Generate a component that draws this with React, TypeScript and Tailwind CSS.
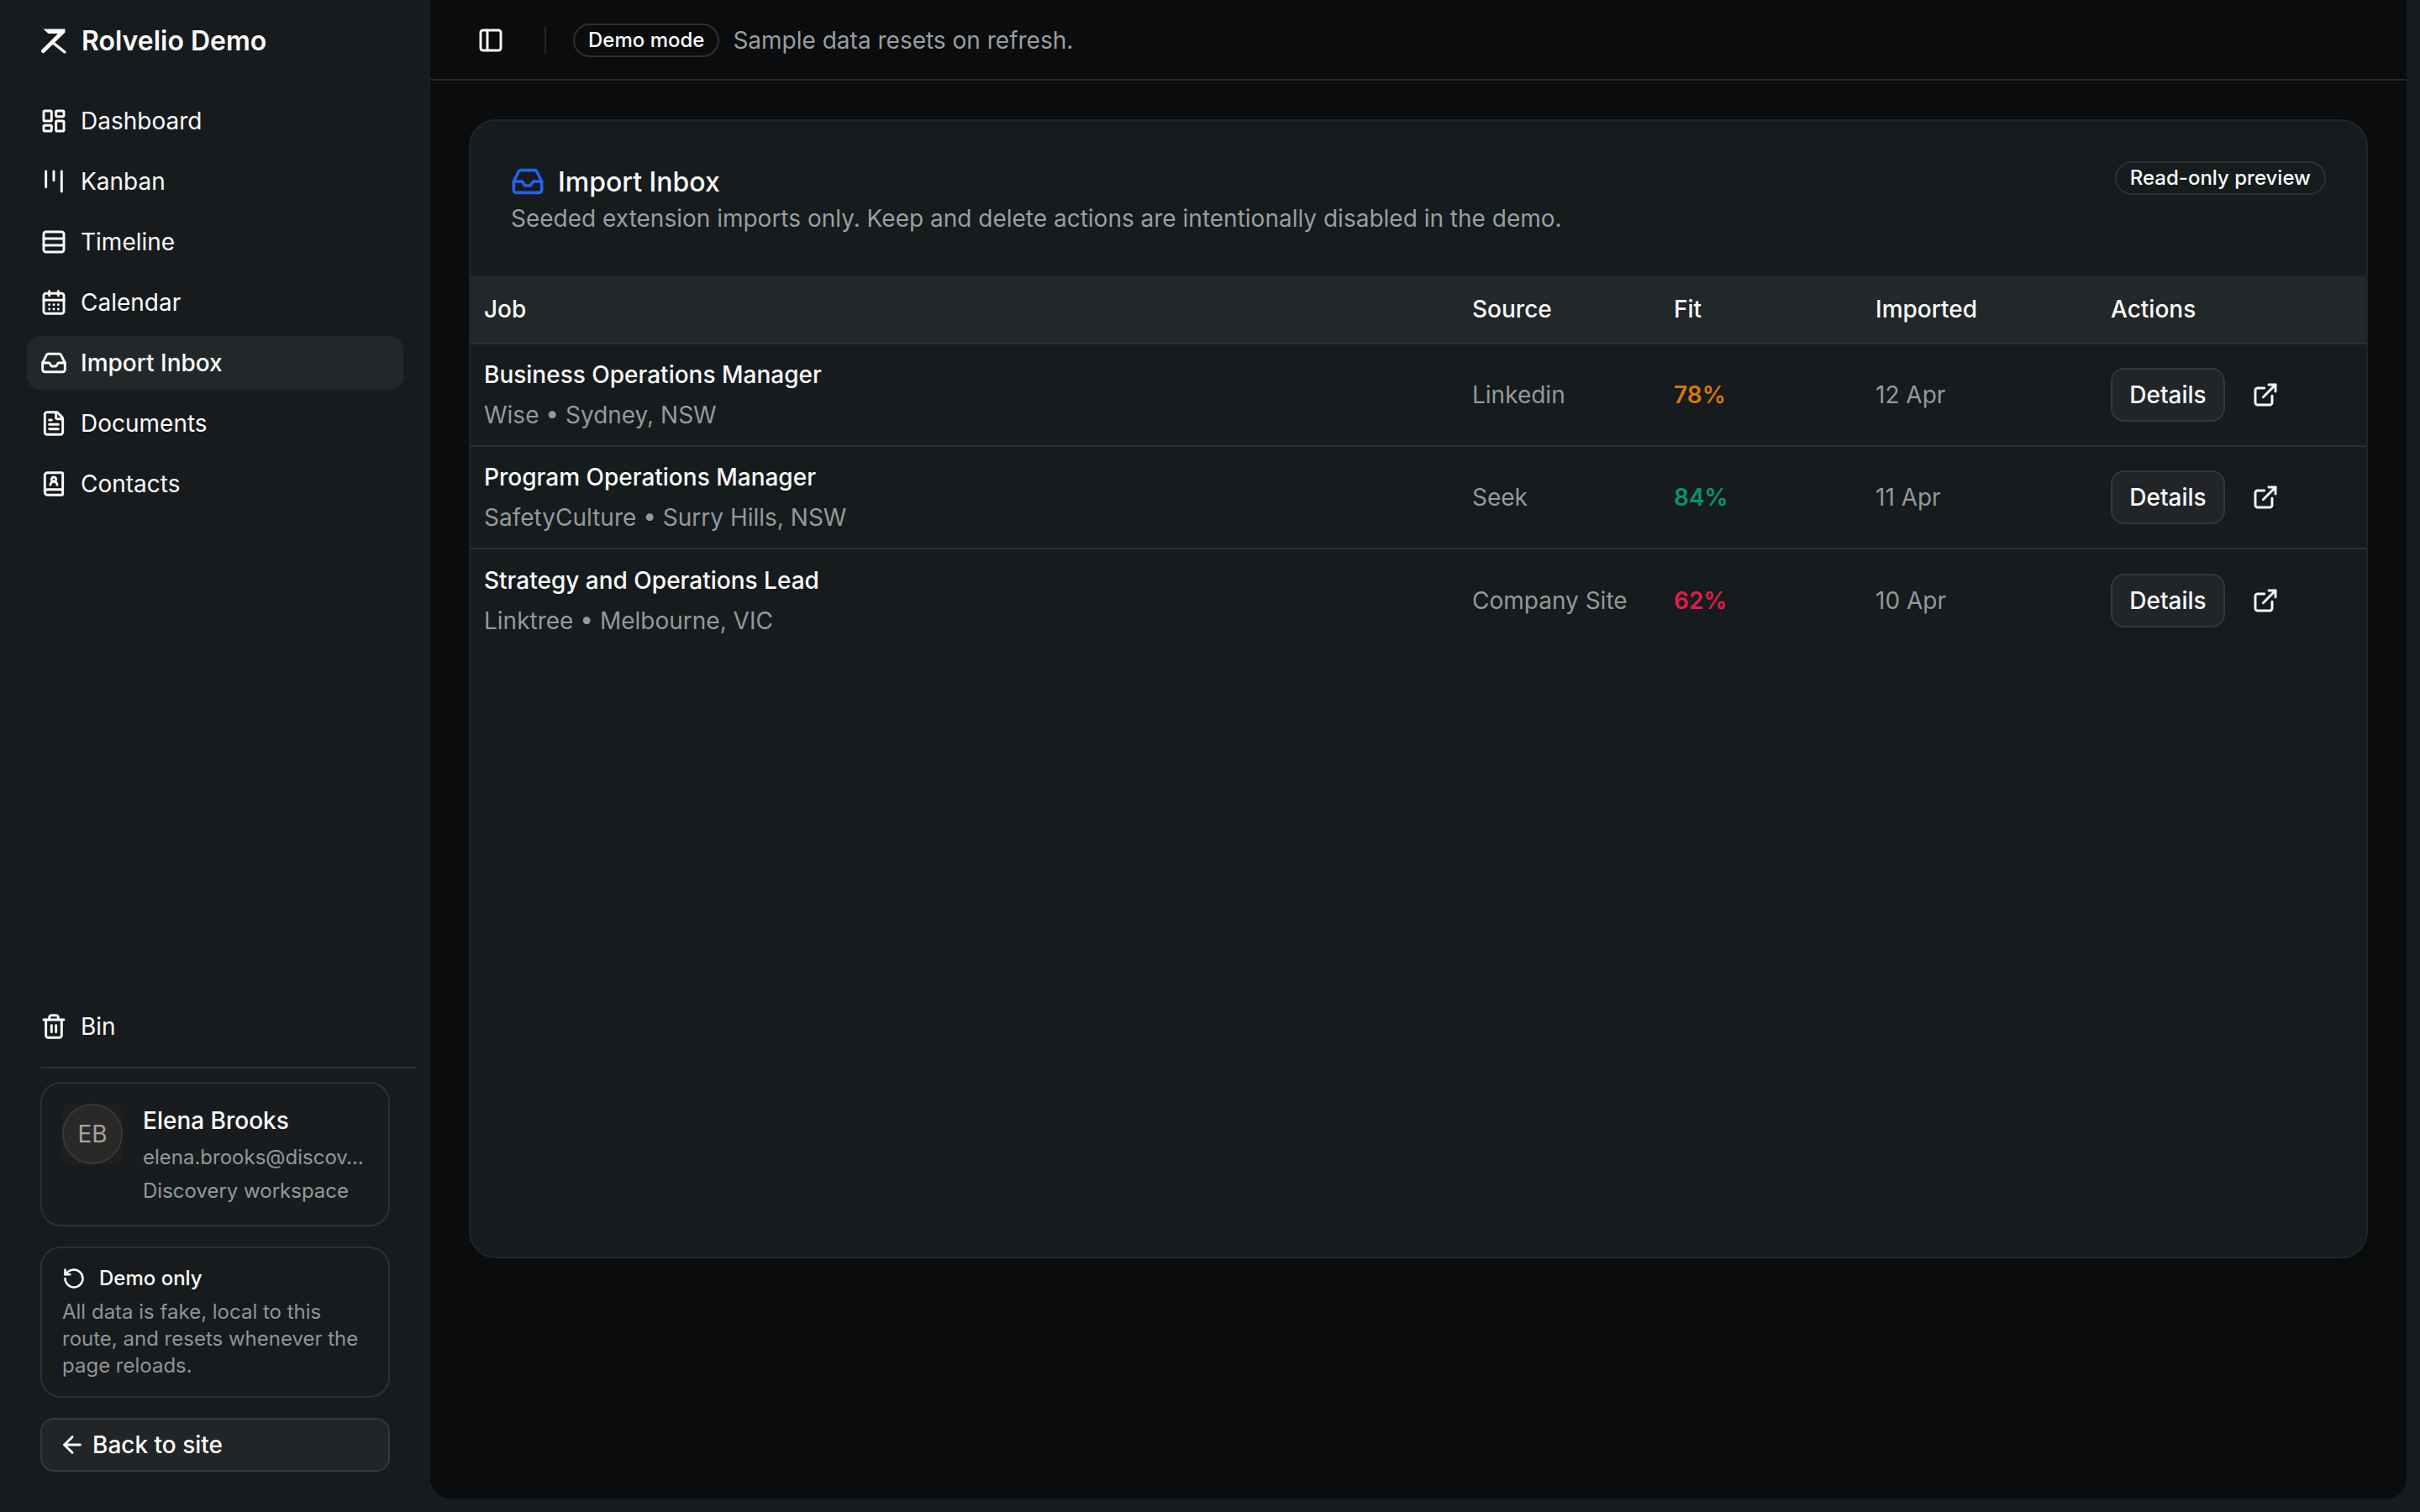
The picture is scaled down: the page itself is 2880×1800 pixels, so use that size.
import React from "react";
import {
  ArrowLeft,
  BookUser,
  CalendarDays,
  ExternalLink,
  FileText,
  Inbox,
  Kanban,
  LayoutDashboard,
  PanelLeft,
  RotateCcw,
  Rows3,
  Trash2,
} from "lucide-react";

const navItems = [
  { label: "Dashboard", icon: LayoutDashboard },
  { label: "Kanban", icon: Kanban },
  { label: "Timeline", icon: Rows3 },
  { label: "Calendar", icon: CalendarDays },
  { label: "Import Inbox", icon: Inbox, active: true },
  { label: "Documents", icon: FileText },
  { label: "Contacts", icon: BookUser },
];

const jobs = [
  {
    title: "Business Operations Manager",
    meta: "Wise • Sydney, NSW",
    source: "Linkedin",
    fit: "78%",
    fitClass: "text-[#d97706]",
    imported: "12 Apr",
  },
  {
    title: "Program Operations Manager",
    meta: "SafetyCulture • Surry Hills, NSW",
    source: "Seek",
    fit: "84%",
    fitClass: "text-[#059669]",
    imported: "11 Apr",
  },
  {
    title: "Strategy and Operations Lead",
    meta: "Linktree • Melbourne, VIC",
    source: "Company Site",
    fit: "62%",
    fitClass: "text-[#e11d48]",
    imported: "10 Apr",
  },
];

const Logo = () => (
  <svg viewBox="0 0 32 32" className="w-8 h-8 shrink-0" fill="none">
    <path
      d="M3.5 1.5H29.5V5.5L5 29.5C4 30.5 2.5 30.5 1.7 29.5C0.8 28.6 0.8 27.2 1.7 26.3L21 7H9.5Z"
      fill="#fafafa"
    />
    <path d="M16.5 19L29 29" stroke="#fafafa" strokeWidth="3.4" strokeLinecap="round" />
  </svg>
);

const Sidebar = () => (
  <aside className="w-[512px] shrink-0 h-full flex flex-col">
    <div className="h-24 shrink-0 pl-12 pt-[2px] flex items-center gap-[17px]">
      <Logo />
      <span className="text-[32px] font-semibold text-[#fafafa]">Rolvelio Demo</span>
    </div>
    <nav className="px-8 pt-4 flex flex-col gap-2">
      {navItems.map((item) => {
        const Icon = item.icon;
        return (
          <a
            key={item.label}
            className={`h-16 rounded-2xl px-4 flex items-center gap-4 text-[28px] text-[#fafafa] ${
              item.active ? "bg-[#22282a] font-medium" : ""
            }`}
          >
            <Icon size={32} strokeWidth={2.2} />
            {item.label}
          </a>
        );
      })}
    </nav>

    <div className="mt-auto pl-12 pb-12 flex flex-col">
      <a className="h-16 flex items-center gap-4 text-[28px] text-[#fafafa]">
        <Trash2 size={32} strokeWidth={2.2} />
        Bin
      </a>
      <div className="h-[2px] mt-4 w-[448px] bg-[#2b3033]" />
      <div className="mt-4 w-[416px] h-[172px] rounded-3xl border-2 border-[#2b3033] bg-[#191c1f] pl-6 pt-6 flex gap-6">
        <div className="w-[72px] h-[72px] shrink-0 rounded-xl bg-[#201f1e]">
          <div className="w-full h-full rounded-full border-2 border-[#3a3836] bg-[#2a2927] flex items-center justify-center text-[28px] text-[#a3a3a3]">
            EB
          </div>
        </div>
        <div className="min-w-0 flex-1 pr-6">
          <div className="mb-1 text-[28px] leading-10 font-medium text-[#fafafa]">Elena Brooks</div>
          <div className="text-2xl leading-10 text-[#94989b]">elena.brooks@discov…</div>
          <div className="text-2xl leading-10 text-[#94989b]">Discovery workspace</div>
        </div>
      </div>
      <div className="mt-6 w-[416px] h-[180px] rounded-3xl border-2 border-[#2b3033] px-6 pt-5">
        <div className="flex items-center gap-[16px] text-2xl leading-8 font-medium text-[#fafafa]">
          <RotateCcw size={28} strokeWidth={2.2} />
          Demo only
        </div>
        <p className="mt-2 text-2xl leading-8 text-[#8f9498]">
          All data is fake, local to this route, and resets whenever the page reloads.
        </p>
      </div>
      <a className="mt-6 w-[416px] h-16 rounded-2xl border-2 border-[#33383b] bg-[#212528] pl-[20px] flex items-center gap-2 text-[28px] font-medium text-[#fafafa]">
        <ArrowLeft size={32} strokeWidth={2.2} />
        Back to site
      </a>
    </div>
  </aside>
);

const Pill = ({ children }: { children: React.ReactNode }) => (
  <span className="h-10 px-4 rounded-full border-2 border-[#2b3033] flex items-center text-2xl font-medium text-[#fafafa]">
    {children}
  </span>
);

const App: React.FC = () => {
  return (
    <div className="h-[1800px] w-[2880px] flex bg-[#171b1e] font-['Inter',sans-serif] overflow-hidden">
      <Sidebar />
      <main className="flex-1 mr-4 mb-4 rounded-b-3xl bg-[#0a0c0e] flex flex-col">
        <header className="h-24 shrink-0 border-b-2 border-[#24282b] pl-14 pt-[2px] flex items-center">
          <PanelLeft size={32} strokeWidth={2.2} className="text-[#fafafa]" />
          <div className="ml-[48px] mr-8 w-[2px] h-8 bg-[#24282b]" />
          <Pill>Demo mode</Pill>
          <span className="ml-4 text-[28px] text-[#9a9ea1]">Sample data resets on refresh.</span>
        </header>

        <div className="px-[46px] pt-[46px]">
          <section className="h-[1356px] rounded-[32px] border-2 border-[#1f2427] bg-[#161b1d] overflow-hidden">
            <div className="h-[184px] px-12 pt-12 flex justify-between">
              <div>
                <div className="flex items-center gap-4 h-[48px]">
                  <Inbox size={40} strokeWidth={2.2} className="text-[#2563eb]" />
                  <h2 className="pt-[2px] text-[32px] font-medium text-[#fafafa]">Import Inbox</h2>
                </div>
                <p className="text-[28px] leading-10 text-[#9a9ea1]">
                  Seeded extension imports only. Keep and delete actions are intentionally disabled
                  in the demo.
                </p>
              </div>
              <div>
                <Pill>Read-only preview</Pill>
              </div>
            </div>

            <table className="w-full table-fixed">
              <thead>
                <tr className="h-[81px] bg-[#22272a] border-b-2 border-[#2b3033] text-left text-[28px] text-[#fafafa]">
                  <th className="w-[1176px] pl-4 pb-[1px] font-medium">Job</th>
                  <th className="w-[240px] pl-4 pb-[1px] font-medium">Source</th>
                  <th className="w-[240px] pl-4 pb-[1px] font-medium">Fit</th>
                  <th className="w-[280px] pl-4 pb-[1px] font-medium">Imported</th>
                  <th className="pl-4 pb-[1px] font-medium">Actions</th>
                </tr>
              </thead>
              <tbody>
                {jobs.map((job, i) => (
                  <tr
                    key={job.title}
                    className={`h-[122px] text-[28px] ${
                      i < jobs.length - 1 ? "border-b-2 border-[#2b3033]" : ""
                    }`}
                  >
                    <td className="pl-4">
                      <div className="font-medium leading-10 text-[#fafafa]">{job.title}</div>
                      <div className="mt-2 leading-10 text-[#94999c]">{job.meta}</div>
                    </td>
                    <td className="pl-4 text-[#94999c]">{job.source}</td>
                    <td className={`pl-4 font-semibold ${job.fitClass}`}>{job.fit}</td>
                    <td className="pl-4 text-[#94999c]">{job.imported}</td>
                    <td className="pl-4">
                      <div className="flex items-center gap-4">
                        <button className="h-16 w-[136px] rounded-2xl border-2 border-[#33383b] bg-[#212528] font-medium text-[#fafafa]">
                          Details
                        </button>
                        <button className="w-16 h-16 flex items-center justify-center text-[#fafafa]">
                          <ExternalLink size={32} strokeWidth={2.2} />
                        </button>
                      </div>
                    </td>
                  </tr>
                ))}
              </tbody>
            </table>
          </section>
        </div>
      </main>
    </div>
  );
};

export default App;
